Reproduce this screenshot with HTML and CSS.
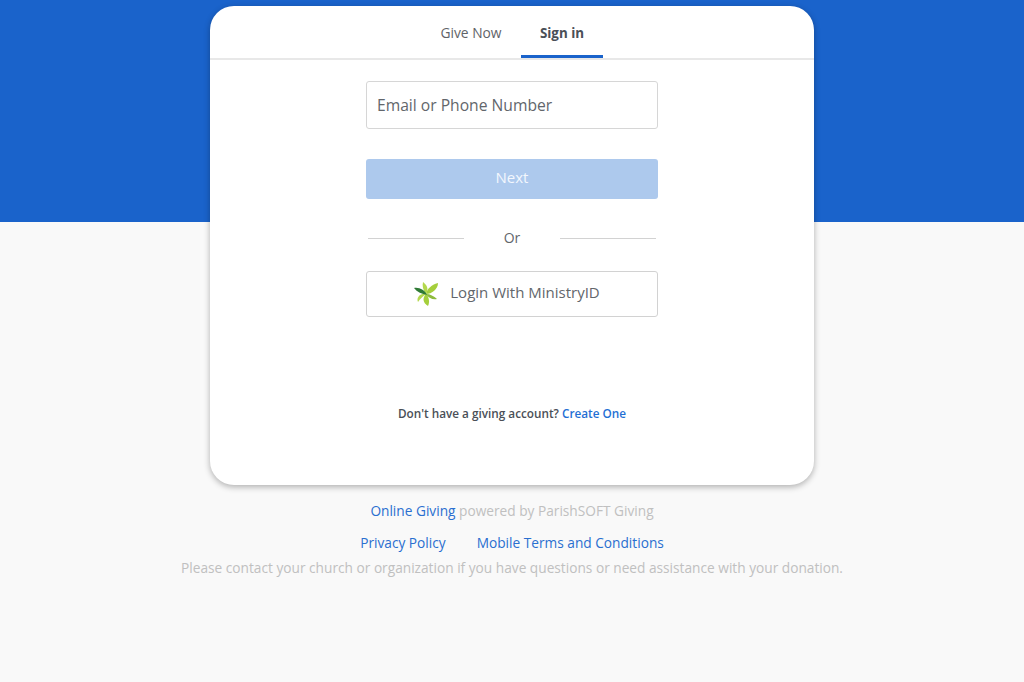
FILE: index.html
```html
<!DOCTYPE html>
<html lang="en">
<head>
<meta charset="utf-8">
<title>Online Giving</title>
<link rel="stylesheet" href="styles.css">
</head>
<body>
<main class="page">
  <section class="card">
    <nav class="tabs">
      <a class="tab">Give Now</a>
      <a class="tab tab-active">Sign in</a>
    </nav>
    <div class="form">
      <div class="input">Email or Phone Number</div>
      <button class="next">Next</button>
      <div class="or"><span class="rule"></span><span class="or-text">Or</span><span class="rule"></span></div>
      <button class="ministry">
        <svg class="leaf" width="26" height="26" viewBox="0 0 26 26">
          <path d="M13 13C14 8 18 4 25 2C25 8 19 13 13 13Z" fill="#a5cf3c"/>
          <path d="M13 13C10 9 9 5 10 1C14 4 16 8 13 13Z" fill="#b4d84e"/>
          <path d="M13 13C16 16 17 21 15 25C10 22 9 17 13 13Z" fill="#a5cf3c"/>
          <path d="M13 13C10 15 7 18 5 21C3 17 7 12 13 13Z" fill="#b4d84e"/>
          <path d="M13 13C17 13 21 15 24 18C20 19 15 17 13 13Z" fill="#8dbb3c"/>
          <path d="M14 14C9 13 4 11 1 7C6 6 12 9 14 14Z" fill="#2f7a35"/>
        </svg>
        <span class="ministry-label">Login With MinistryID</span>
      </button>
    </div>
    <p class="account">Don't have a giving account? <a class="create">Create One</a></p>
  </section>
  <footer class="footer">
    <p class="powered"><a class="link">Online Giving</a> powered by ParishSOFT Giving</p>
    <p class="links"><a class="link">Privacy Policy</a><a class="link">Mobile Terms and Conditions</a></p>
    <p class="contact">Please contact your church or organization if you have questions or need assistance with your donation.</p>
  </footer>
</main>
</body>
</html>
```
FILE: styles.css
```css
* { box-sizing: border-box; }
html, body { margin: 0; height: 100%; }
body {
  overflow: hidden;
  font-family: "Open Sans", "Noto Sans", sans-serif;
  background: linear-gradient(to bottom, #1a63cb 0, #1a63cb 222px, #f9f9f9 222px);
}
.page {
  display: flex;
  flex-direction: column;
  align-items: center;
  padding-top: 6px;
}
.card {
  width: 604px;
  height: 479px;
  background: #fff;
  border-radius: 24px;
  box-shadow: 0 2px 6px rgba(0, 0, 0, 0.3);
  display: flex;
  flex-direction: column;
  align-items: center;
}
.tabs {
  width: 100%;
  height: 54px;
  display: flex;
  justify-content: center;
  gap: 9px;
  border-bottom: 2px solid #e8e8e8;
  padding-left: 9px;
}
.tab {
  width: 82px;
  height: 52px;
  display: flex;
  align-items: center;
  justify-content: center;
  font-size: 13.8px;
  color: #5f6368;
}
.tab-active {
  font-size: 13.4px;
  font-weight: 700;
  color: #4a4f57;
  border-bottom: 3px solid #1a63cb;
  padding-top: 5px;
}
.form {
  width: 292px;
  margin-top: 21px;
  display: flex;
  flex-direction: column;
}
.input {
  height: 48px;
  border: 1px solid #d6d6d6;
  border-radius: 3px;
  padding-left: 10px;
  display: flex;
  align-items: center;
  font-size: 15.65px;
  color: #62666b;
}
.next {
  height: 40px;
  margin-top: 30px;
  padding: 0 0 4px;
  border: 0;
  border-radius: 3px;
  background: #adc9ed;
  color: #f3f7fd;
  font: 400 15px "Open Sans", sans-serif;
}
.or {
  height: 20px;
  margin-top: 29px;
  display: flex;
  align-items: center;
  justify-content: center;
  font-size: 14px;
  color: #62666b;
}
.rule {
  width: 96px;
  height: 1px;
  background: #d2d2d2;
}
.or-text {
  width: 96px;
  text-align: center;
  margin-top: -1px;
}
.ministry {
  height: 46px;
  margin-top: 23px;
  background: #fff;
  border: 1px solid #d2d2d2;
  border-radius: 3px;
  display: flex;
  align-items: center;
  justify-content: center;
  gap: 11px;
  font: 15px "Open Sans", sans-serif;
  color: #62666b;
  padding: 0 11px 0 0;
}
.leaf { flex: none; }
.ministry-label { padding-bottom: 5px; }
.account {
  margin: 88px 0 0;
  font-size: 11.75px;
  font-weight: 600;
  line-height: 17px;
  color: #4a4f57;
}
.create { color: #1f6fd4; font-weight: 600; }
.footer {
  text-align: center;
  font-size: 13.7px;
  color: #c0c0c0;
}
.footer p { margin: 0; line-height: 20px; }
.link { color: #2a6fd0; }
.footer .powered { margin-top: 16px; }
.footer .links {
  margin-top: 12px;
  display: flex;
  justify-content: center;
  gap: 31px;
}
.footer .contact { margin-top: 5px; }
```
